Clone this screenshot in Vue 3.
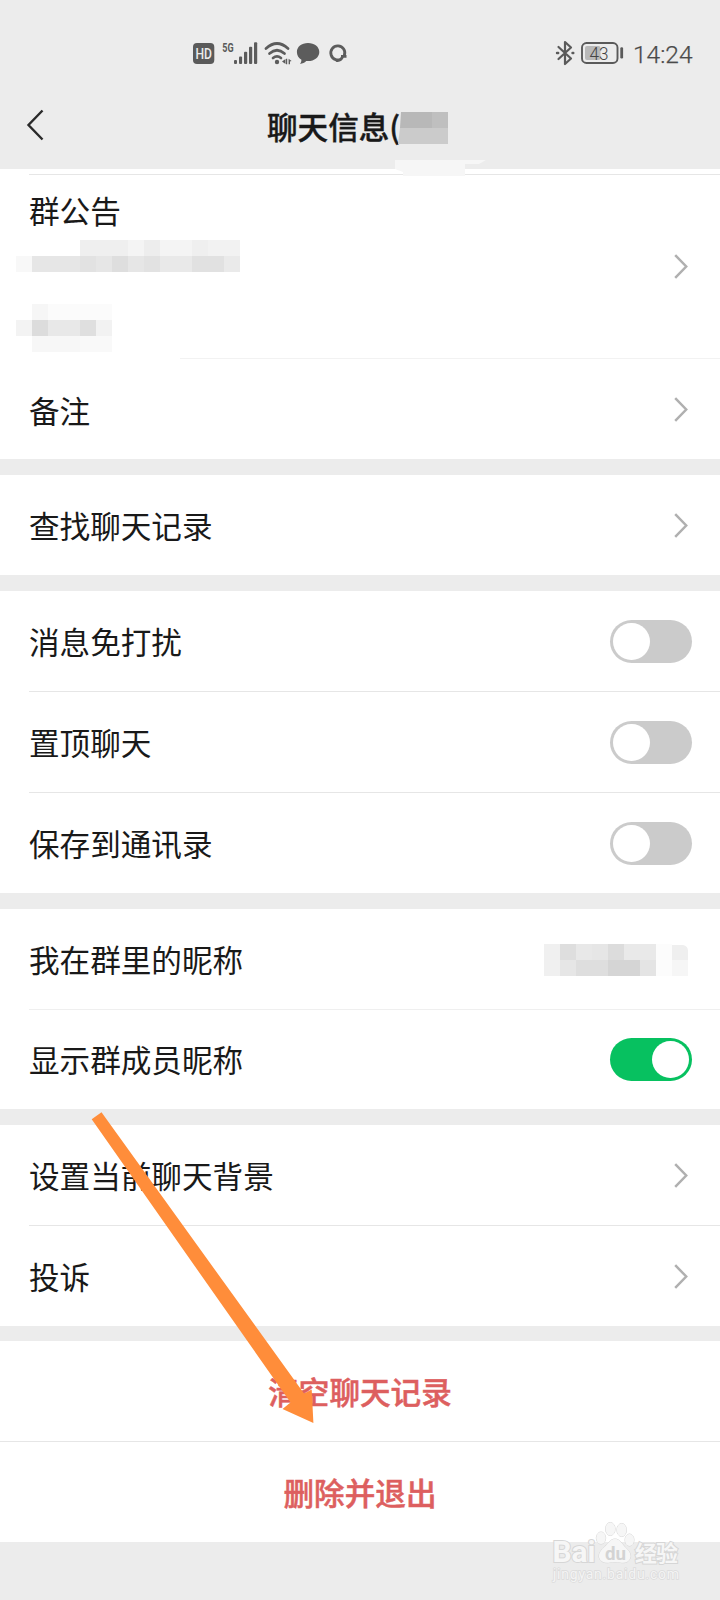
<script setup>
// Blurred text is drawn as runs of 16px cells: [x, y, width, color]
const noticeCells = [
  [64, 0, 48, '#efefef'], [112, 0, 16, '#f4f4f4'], [128, 0, 16, '#ededed'], [144, 0, 32, '#f4f4f4'],
  [176, 0, 16, '#efefef'], [192, 0, 32, '#f2f2f2'],
  [0, 16, 16, '#f8f8f8'], [16, 16, 48, '#e6e6e6'], [64, 16, 16, '#e2e2e2'], [80, 16, 16, '#e6e6e6'],
  [96, 16, 16, '#dedede'], [112, 16, 16, '#e6e6e6'], [128, 16, 16, '#e2e2e2'], [144, 16, 32, '#e9e9e9'],
  [176, 16, 32, '#e1e1e1'], [208, 16, 16, '#eaeaea'],
  [16, 64, 16, '#f6f6f6'], [32, 64, 64, '#fbfbfb'],
  [0, 80, 16, '#f3f3f3'], [16, 80, 16, '#dcdcdc'], [32, 80, 32, '#e8e8e8'], [64, 80, 16, '#dfdfdf'],
  [80, 80, 16, '#f2f2f2'],
  [16, 96, 48, '#f7f7f7'], [64, 96, 32, '#f9f9f9'],
]
const nameCells = [
  [0, 0, 16, '#f0f0f0'], [16, 0, 16, '#dedede'], [32, 0, 16, '#e8e8e8'], [48, 0, 16, '#e6e6e6'],
  [64, 0, 16, '#dcdcdc'], [80, 0, 32, '#e9e9e9'], [112, 0, 16, '#fcfcfc'],
  [0, 16, 16, '#f0f0f0'], [16, 16, 16, '#e6e6e6'], [32, 16, 32, '#dedede'], [64, 16, 32, '#d5d5d5'],
  [96, 16, 16, '#e4e4e4'], [112, 16, 16, '#fcfcfc'], [128, 16, 16, '#f6f6f6'],
]
const groups = [
  [
    { label: '群公告', kind: 'link', cls: 'notice', cells: noticeCells },
    { label: '备注', kind: 'link' },
  ],
  [{ label: '查找聊天记录', kind: 'link' }],
  [
    { label: '消息免打扰', kind: 'switch', on: false },
    { label: '置顶聊天', kind: 'switch', on: false },
    { label: '保存到通讯录', kind: 'switch', on: false },
  ],
  [
    { label: '我在群里的昵称', kind: 'name' },
    { label: '显示群成员昵称', kind: 'switch', on: true },
  ],
  [
    { label: '设置当前聊天背景', kind: 'link' },
    { label: '投诉', kind: 'link' },
  ],
]
</script>

<template>
  <div class="page">
    <div class="status">
      <svg class="left-icons" width="160" height="30" viewBox="190 38 160 30">
        <rect x="193" y="43" width="21.3" height="21" rx="4" fill="#5a5a5a" />
        <text x="195.500" y="59.200" font-size="15.500" font-weight="500" fill="#ececec" textLength="16.500" lengthAdjust="spacingAndGlyphs">HD</text>
        <text x="222.300" y="52" font-size="13" font-weight="700" fill="#5a5a5a" textLength="11.300" lengthAdjust="spacingAndGlyphs">5G</text>
        <g fill="#5c5c5c">
          <rect x="234" y="60" width="3" height="4" rx="1" />
          <rect x="239" y="56.4" width="3.1" height="7.6" rx="1" />
          <rect x="244" y="51.7" width="3.2" height="12.3" rx="1" />
          <rect x="249" y="46.8" width="3.2" height="17.2" rx="1" />
          <rect x="254" y="42.2" width="3.2" height="21.8" rx="1" />
        </g>
        <g fill="none" stroke="#5c5c5c" stroke-width="2.700" stroke-linecap="round">
          <path d="M266 48.500Q277 38.500 288 48.500" />
          <path d="M269.500 53.500Q277 47 284.500 53.500" />
          <path d="M273 58Q277 54.800 281 58" />
        </g>
        <circle cx="277" cy="62" r="2.200" fill="#5c5c5c" />
        <path d="M282 61.500L285.500 59v5zM286 58.800h1.200v5.400H286zM288.600 58.800l3 2.200-1.600.4v2.800h-1.400z" fill="#5c5c5c" />
        <path d="M308 43c6.500 0 11.300 3.800 11.300 9s-4.800 9.100-11.300 9.100c-.6 0-1.200 0-1.800-.1-1.600 1.700-3.600 2.700-6.200 2.900 1-1.300 1.500-2.700 1.400-4.200-2.900-1.700-4.500-4.400-4.500-7.700 0-5.200 4.600-9 11.100-9z" fill="#5c5c5c" />
        <path d="M342 58.500A7 7 0 1 1 344.300 55.500M336 60.300q4.500 1.200 6.800-3.800M341 56.300h5.500" fill="none" stroke="#5c5c5c" stroke-width="2.800" />
      </svg>
      <svg class="right-icons" width="72" height="30" viewBox="554 38 72 30">
        <g fill="none" stroke="#5a5a5a" stroke-width="2.200" stroke-linejoin="round" stroke-linecap="round">
          <path d="M558.500 47l12.500 11.500-6 5.500V42l6 5.500-12.500 11.500" />
          <path d="M557 53h1.200M572.500 53h.8" stroke-width="2.400" />
          <rect x="582" y="43" width="35.500" height="20" rx="4.500" stroke-width="1.900" />
        </g>
        <rect x="585" y="46" width="15.500" height="14" rx="2" fill="#b9b9b9" />
        <rect x="620.300" y="47.300" width="2.800" height="11.200" rx="1.200" fill="#5a5a5a" />
        <text x="589.500" y="59.700" font-size="18" font-weight="300" fill="#444" textLength="19" lengthAdjust="spacingAndGlyphs">43</text>
      </svg>
      <svg class="clock" width="64" height="30" viewBox="632 38 64 30">
        <text x="633" y="63.200" font-size="24.500" font-weight="300" fill="#4a4a4a" stroke="#4a4a4a" stroke-width=".25" textLength="59.500" lengthAdjust="spacingAndGlyphs">14:24</text>
      </svg>
    </div>

    <header class="nav">
      <svg class="back" width="20" height="32" viewBox="0 0 20 32">
        <path d="M17.500 1.500L3.500 16l14 14.500" fill="none" stroke="#2a2a2a" stroke-width="2.400" />
      </svg>
      <h1>聊天信息(</h1>
      <svg class="count" width="90" height="70" viewBox="0 0 90 70">
        <path d="M6 0H37V16H5z" fill="#b8b8b8" />
        <rect x="37" width="16" height="16" fill="#bfbfbf" />
        <path d="M5 16H53V32H3z" fill="#cbcbcb" />
        <path d="M0 48H91L84 52H70V64H8V60L0 57z" fill="#f6f6f6" />
      </svg>
    </header>

    <main>
      <section v-for="(group, g) in groups" :key="g" :class="['group', 'g' + g]">
        <div v-for="row in group" :key="row.label" :class="['row', row.cls]">
          <span class="label">{{ row.label }}</span>
          <svg v-if="row.cells" class="notice-text" width="224" height="112" shape-rendering="crispEdges">
            <rect v-for="(c, i) in row.cells" :key="i" :x="c[0]" :y="c[1]" :width="c[2]" height="16" :fill="c[3]" />
          </svg>
          <svg v-if="row.kind === 'link'" class="chevron" width="14" height="25" viewBox="0 0 14 25">
            <path d="M1.200 1.200L12.200 12.500L1.200 23.800" fill="none" stroke="#b0b0b0" stroke-width="2.500" />
          </svg>
          <span v-else-if="row.kind === 'switch'" :class="['switch', { on: row.on }]"><i></i></span>
          <svg v-else class="member-name" width="144" height="32">
            <rect v-for="(c, i) in nameCells" :key="i" :x="c[0]" :y="c[1]" :width="c[2]" height="16" :fill="c[3]" />
            <path d="M128 1h11q5 1 5 6v9h-16z" fill="#efefef" />
          </svg>
        </div>
      </section>
      <section class="group danger">
        <div class="row">清空聊天记录</div>
        <div class="row">删除并退出</div>
      </section>
    </main>

    <svg class="arrow" width="230" height="320" viewBox="88 1108 230 320">
      <path d="M91.700 1119.300L101.500 1112.300L304 1393.500L311.700 1389.500L313.400 1423L282.500 1409L290.500 1402.500z" fill="#ff8d3a" />
    </svg>

    <svg class="watermark" width="140" height="70" viewBox="548 1516 140 70">
      <g fill="#f6f6f6" stroke="#d6d6d6" stroke-width="1" paint-order="stroke">
        <text x="552.500" y="1562" font-size="29" font-weight="700" textLength="43" lengthAdjust="spacingAndGlyphs" stroke-width="2">Bai</text>
        <ellipse cx="601" cy="1538" rx="4.700" ry="6" />
        <ellipse cx="610.300" cy="1529" rx="4.800" ry="6.500" />
        <ellipse cx="621.700" cy="1530" rx="4.800" ry="6.500" />
        <ellipse cx="629.500" cy="1540" rx="4.500" ry="6" />
        <path d="M615 1539c5 0 7 5 10.500 8.500 4.500 4 6.500 8 4 12-2 3.500-6 3.500-9 3-4-.7-7-.7-11 0-3 .5-7 .5-9.500-3-2.500-4 0-8.500 4-12 4-3.500 6-8.500 11-8.500z" />
        <text x="605" y="1560" font-size="19" font-weight="700" fill="#d3d3d3" stroke="none" textLength="21" lengthAdjust="spacingAndGlyphs">du</text>
        <text x="635" y="1560.500" class="cjk" font-size="22" font-weight="700" textLength="43" stroke-width="2">经验</text>
        <text x="553" y="1578.500" font-size="14" textLength="126" stroke="#dbdbdb" stroke-width="1.500" fill="#f4f4f4">jingyan.baidu.com</text>
      </g>
    </svg>
  </div>
</template>

<style>
body { margin: 0; }
</style>

<style scoped>
.page {
  position: relative;
  width: 720px;
  height: 1600px;
  overflow: hidden;
  background: #ececec;
  color: #191919;
  font-family: "Noto Sans CJK SC", sans-serif;
}
svg { display: block; flex: none; }
svg text { font-family: Roboto, "Liberation Sans", sans-serif; }
svg text.cjk { font-family: "Noto Sans CJK SC", sans-serif; }
.status {
  display: flex;
  height: 30px;
  padding: 38px 24px 0 190px;
}
.right-icons { margin-left: auto; }
.clock { margin-left: 6px; }
.nav {
  position: relative;
  display: flex;
  align-items: center;
  height: 101px;
  box-sizing: border-box;
  padding: 14px 0 0 25px;
}
.back { margin-top: -1px; }
h1 {
  margin: 0 0 0 222px;
  font-size: 30.6px;
  line-height: 44px;
  font-weight: 500;
  -webkit-text-stroke: 0.4px currentColor;
}
.count {
  position: absolute;
  left: 395px;
  top: 44px;
  z-index: 1;
  overflow: visible;
}
.group {
  background: #fff;
  margin-bottom: 16px;
}
.row {
  position: relative;
  display: flex;
  align-items: center;
  justify-content: space-between;
  height: 100px;
  padding: 0 28.5px 0 29px;
  font-size: 30.6px;
  line-height: 44px;
}
.row + .row { box-sizing: border-box; height: 101px; padding-top: 1px; }
.row + .row::before {
  content: "";
  position: absolute;
  top: 0;
  left: 29px;
  right: 0;
  height: 1px;
  background: #e6e6e6;
}
.g0 { height: 290px; }
.g0 .notice { height: 184px; padding-top: 6px; }
.g0 .notice + .row { height: 100px; }
.g0 .notice + .row::before { top: -1px; left: 180px; background: #f2f2f2; }
.notice::before {
  content: "";
  position: absolute;
  top: 5px;
  left: 29px;
  right: 0;
  height: 1px;
  background: #e6e6e6;
}
.notice .label { align-self: flex-start; margin-top: 13px; }
.notice .chevron { margin-top: -1px; }
.notice-text { position: absolute; left: 16px; top: 71px; }
.g2 { height: 302px; }
.g3 { height: 200px; }
.g3 .row + .row { height: 100px; padding-top: 0; }
.g3 .row + .row::before { background: #efefef; }
.g4 { margin-bottom: 15px; }
.chevron { margin-right: 3.5px; }
.member-name { margin: 2px 3.5px 0 0; }
.switch {
  box-sizing: border-box;
  width: 81.5px;
  height: 43px;
  padding: 3px;
  border-radius: 22px;
  background: #cbcbcb;
}
.switch i {
  display: block;
  width: 36.5px;
  height: 37px;
  border-radius: 50%;
  background: #fff;
}
.switch.on { background: #07c160; }
.switch.on i { margin-left: auto; }
.danger { margin-bottom: 0; }
.danger .row {
  justify-content: center;
  padding: 0;
  color: #dd5f5f;
  font-weight: 500;
  -webkit-text-stroke: 0.5px currentColor;
}
.danger .row + .row::before { left: 0; }
.arrow { position: absolute; left: 88px; top: 1108px; }
.watermark { position: absolute; left: 548px; top: 1516px; }
</style>
